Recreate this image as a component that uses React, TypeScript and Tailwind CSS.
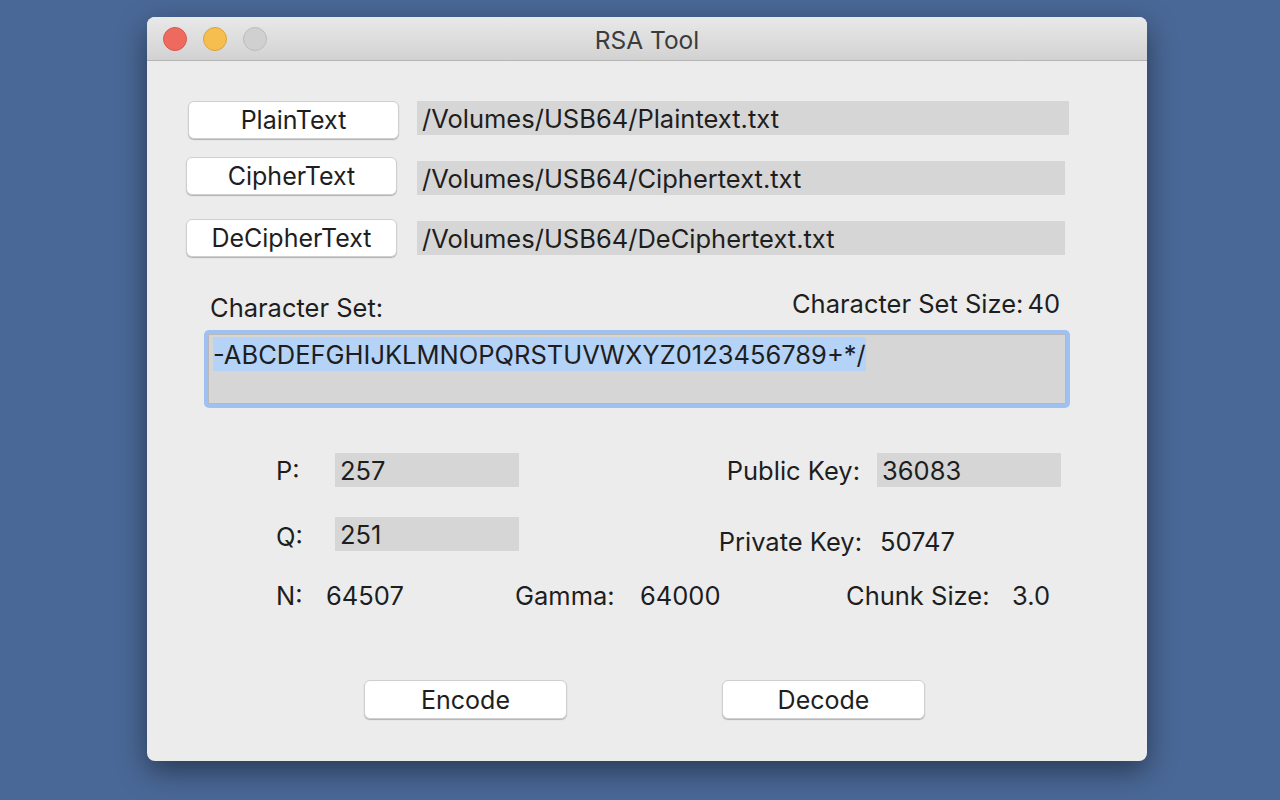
import React from 'react';

const font = { fontFamily: 'Inter, "Liberation Sans", Arial, sans-serif' };

function MacButton({ label, className = '' }: { label: string; className?: string }) {
  return (
    <button
      type="button"
      className={`bg-white rounded-[6px] border border-[#cfcfcf] shadow-[0_1px_1px_rgba(0,0,0,0.25)] text-[25px] leading-none text-[#1e1e1e] flex items-center justify-center pt-[1px] ${className}`}
    >
      {label}
    </button>
  );
}

function Field({ value, className = '' }: { value: string; className?: string }) {
  return (
    <div className={`bg-[#d6d6d6] h-[34px] flex items-center px-[5px] pt-[3px] text-[25.5px] text-[#1e1e1e] whitespace-nowrap ${className}`}>
      {value}
    </div>
  );
}

export default function App() {
  return (
    <div className="w-[1280px] h-[800px] bg-[#4a6897] pt-[17px] pl-[147px] overflow-hidden" style={font}>
      <div className="w-[1000px] h-[744px] rounded-[8px] bg-[#ececec] overflow-hidden shadow-[0_10px_30px_rgba(0,0,0,0.45)] flex flex-col">
        {/* Barra de título */}
        <div className="relative h-[44px] bg-gradient-to-b from-[#e9e9e9] to-[#d2d2d2] border-b border-[#b4b4b4] flex items-center justify-center shrink-0">
          <div className="absolute left-[16px] top-[10px] flex gap-[16px]">
            <div className="w-[24px] h-[24px] rounded-full bg-[#ee6a5f] border border-[#d55a50]" />
            <div className="w-[24px] h-[24px] rounded-full bg-[#f5be4f] border border-[#d9a43e]" />
            <div className="w-[24px] h-[24px] rounded-full bg-[#d0d0d0] border border-[#bcbcbc]" />
          </div>
          <span className="text-[24.5px] text-[#3c3c3c] pt-[3px]">RSA Tool</span>
        </div>

        <div className="flex flex-col">
          {/* Archivos */}
          <div className="flex items-start mt-[40px]">
            <MacButton label="PlainText" className="ml-[41px] w-[211px] h-[38px]" />
            <Field value="/Volumes/USB64/Plaintext.txt" className="ml-[18px] w-[652px]" />
          </div>
          <div className="flex items-start mt-[18px]">
            <MacButton label="CipherText" className="ml-[39px] w-[211px] h-[38px]" />
            <Field value="/Volumes/USB64/Ciphertext.txt" className="ml-[20px] mt-[4px] w-[648px]" />
          </div>
          <div className="flex items-start mt-[24px]">
            <MacButton label="DeCipherText" className="ml-[39px] w-[211px] h-[38px]" />
            <Field value="/Volumes/USB64/DeCiphertext.txt" className="ml-[20px] mt-[2px] w-[648px]" />
          </div>

          {/* Conjunto de caracteres */}
          <div className="flex items-start justify-between mt-[32px] h-[30px] pl-[63px] pr-[87px] text-[25.5px] leading-[30px] text-[#1e1e1e]">
            <span className="mt-[4px]">Character Set:</span>
            <span>
              Character Set Size:<span className="ml-[4px]">40</span>
            </span>
          </div>
          <div className="ml-[57px] mt-[11px] w-[866px] h-[78px] rounded-[5px] bg-[#9fc0f2] p-[4px]">
            <div className="w-full h-full bg-[#d6d6d6] border border-[#b8b8b8] pl-[4px] pt-[2px]">
              <span className="bg-[#b4d3f7] text-[25.5px] leading-[33px] pt-[1px] text-[#1e1e1e] inline-block">
                -ABCDEFGHIJKLMNOPQRSTUVWXYZ0123456789+*/
              </span>
            </div>
          </div>

          {/* Claves */}
          <div className="flex items-center mt-[45px] h-[34px] pl-[129px] text-[25.5px] text-[#1e1e1e]">
            <span className="w-[59px] pt-[3px]">P:</span>
            <Field value="257" className="w-[184px]" />
            <span className="w-[341px] text-right pt-[3px]">Public Key:</span>
            <Field value="36083" className="ml-[17px] w-[184px]" />
          </div>
          <div className="flex items-start mt-[30px] h-[34px] pl-[129px] text-[25.5px] text-[#1e1e1e]">
            <span className="w-[59px] leading-[34px] pt-[3px]">Q:</span>
            <Field value="251" className="w-[184px]" />
            <span className="w-[343px] text-right mt-[10px] leading-[30px]">Private Key:</span>
            <span className="ml-[18px] mt-[10px] leading-[30px]">50747</span>
          </div>
          <div className="flex items-center mt-[30px] h-[30px] pl-[129px] text-[25.5px] leading-[30px] text-[#1e1e1e]">
            <span className="w-[50px]">N:</span>
            <span className="w-[189px]">64507</span>
            <span className="w-[125px]">Gamma:</span>
            <span className="w-[206px]">64000</span>
            <span className="w-[166px]">Chunk Size:</span>
            <span>3.0</span>
          </div>

          {/* Acciones */}
          <div className="flex mt-[69px] pl-[217px] gap-[155px]">
            <MacButton label="Encode" className="w-[203px] h-[39px]" />
            <MacButton label="Decode" className="w-[203px] h-[39px]" />
          </div>
        </div>
      </div>
    </div>
  );
}
